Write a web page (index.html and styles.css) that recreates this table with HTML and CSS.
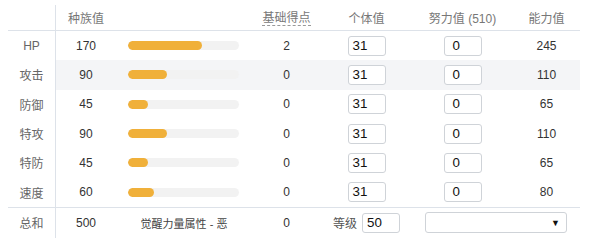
FILE: index.html
```html
<!DOCTYPE html>
<html lang="zh">
<head>
<meta charset="utf-8">
<link rel="stylesheet" href="styles.css">
</head>
<body>
<div class="stats">
  <div class="row head">
    <div class="lbl"></div>
    <div class="c">种族值</div>
    <div class="c"></div>
    <div class="c"><span class="tip">基础得点</span></div>
    <div class="c">个体值</div>
    <div class="c">努力值 (510)</div>
    <div class="c">能力值</div>
  </div>
  <div class="row">
    <div class="lbl">HP</div>
    <div class="c v">170</div>
    <div class="c"><div class="track"><div class="fill" style="width:66.7%"></div></div></div>
    <div class="c v">2</div>
    <div class="c"><div class="inp iv">31</div></div>
    <div class="c"><div class="inp ev">0</div></div>
    <div class="c v">245</div>
  </div>
  <div class="row hl">
    <div class="lbl">攻击</div>
    <div class="c v">90</div>
    <div class="c"><div class="track"><div class="fill" style="width:35.3%"></div></div></div>
    <div class="c v">0</div>
    <div class="c"><div class="inp iv">31</div></div>
    <div class="c"><div class="inp ev">0</div></div>
    <div class="c v">110</div>
  </div>
  <div class="row">
    <div class="lbl">防御</div>
    <div class="c v">45</div>
    <div class="c"><div class="track"><div class="fill" style="width:17.6%"></div></div></div>
    <div class="c v">0</div>
    <div class="c"><div class="inp iv">31</div></div>
    <div class="c"><div class="inp ev">0</div></div>
    <div class="c v">65</div>
  </div>
  <div class="row">
    <div class="lbl">特攻</div>
    <div class="c v">90</div>
    <div class="c"><div class="track"><div class="fill" style="width:35.3%"></div></div></div>
    <div class="c v">0</div>
    <div class="c"><div class="inp iv">31</div></div>
    <div class="c"><div class="inp ev">0</div></div>
    <div class="c v">110</div>
  </div>
  <div class="row">
    <div class="lbl">特防</div>
    <div class="c v">45</div>
    <div class="c"><div class="track"><div class="fill" style="width:17.6%"></div></div></div>
    <div class="c v">0</div>
    <div class="c"><div class="inp iv">31</div></div>
    <div class="c"><div class="inp ev">0</div></div>
    <div class="c v">65</div>
  </div>
  <div class="row">
    <div class="lbl">速度</div>
    <div class="c v">60</div>
    <div class="c"><div class="track"><div class="fill" style="width:23.5%"></div></div></div>
    <div class="c v">0</div>
    <div class="c"><div class="inp iv">31</div></div>
    <div class="c"><div class="inp ev">0</div></div>
    <div class="c v">80</div>
  </div>
  <div class="row foot">
    <div class="lbl">总和</div>
    <div class="c v">500</div>
    <div class="c hp">觉醒力量属性 - 恶</div>
    <div class="c v">0</div>
    <div class="c level"><span class="lvl">等级</span><div class="inp lv">50</div></div>
    <div class="c wide"><div class="sel"><span class="arrow">▼</span></div></div>
  </div>
</div>
</body>
</html>
```
FILE: styles.css
```css
html, body {
  margin: 0;
  padding: 0;
  background: #fff;
}
body {
  padding: 5px 0 0 8px;
  font-family: "Liberation Sans", "Noto Sans CJK SC", sans-serif;
  font-size: 12px;
  color: #333;
}
.stats {
  width: 572px;
}
.row {
  display: grid;
  grid-template-columns: 48px 60px 136px 69px 91px 101px 67px;
  height: 29.333px;
  align-items: center;
}
.row.head {
  height: 25px;
  border-bottom: 1px solid #dde2e9;
  color: #777;
}
.row.foot {
  height: 30px;
  border-top: 1px solid #dde2e9;
  grid-template-columns: 48px 60px 136px 69px 91px 168px;
}
.lbl {
  height: 100%;
  display: flex;
  align-items: center;
  justify-content: center;
  border-right: 1px solid #dde2e9;
  color: #666;
}
.c {
  display: flex;
  align-items: center;
  justify-content: center;
  height: 100%;
}
.row.hl .c {
  background: #f4f5f7;
}
.tip {
  border-bottom: 1px dashed #999;
  line-height: 14px;
  padding-top: 1px;
}
.v {
  color: #333;
}
.track {
  width: 111px;
  height: 9px;
  border-radius: 5px;
  background: #f2f2f2;
  margin-left: -1px;
  overflow: hidden;
}
.fill {
  height: 100%;
  border-radius: 5px;
  background: #f0b03a;
}
.inp {
  box-sizing: border-box;
  width: 38px;
  height: 20px;
  border: 1px solid #cfd3d8;
  border-radius: 3px;
  background: #fff;
  font-family: "Liberation Sans", sans-serif;
  font-size: 13.33px;
  color: #111;
  line-height: 18px;
  padding-left: 4px;
}
.inp.ev {
  padding-left: 8px;
}
.level {
  gap: 5px;
  color: #555;
}
.hp {
  font-size: 11px;
  color: #444;
}
.sel {
  box-sizing: border-box;
  width: 142px;
  height: 21px;
  border: 1px solid #cfd3d8;
  border-radius: 3px;
  display: flex;
  align-items: center;
  justify-content: flex-end;
  padding-right: 6px;
}
.arrow {
  font-size: 9px;
  color: #111;
}
```
